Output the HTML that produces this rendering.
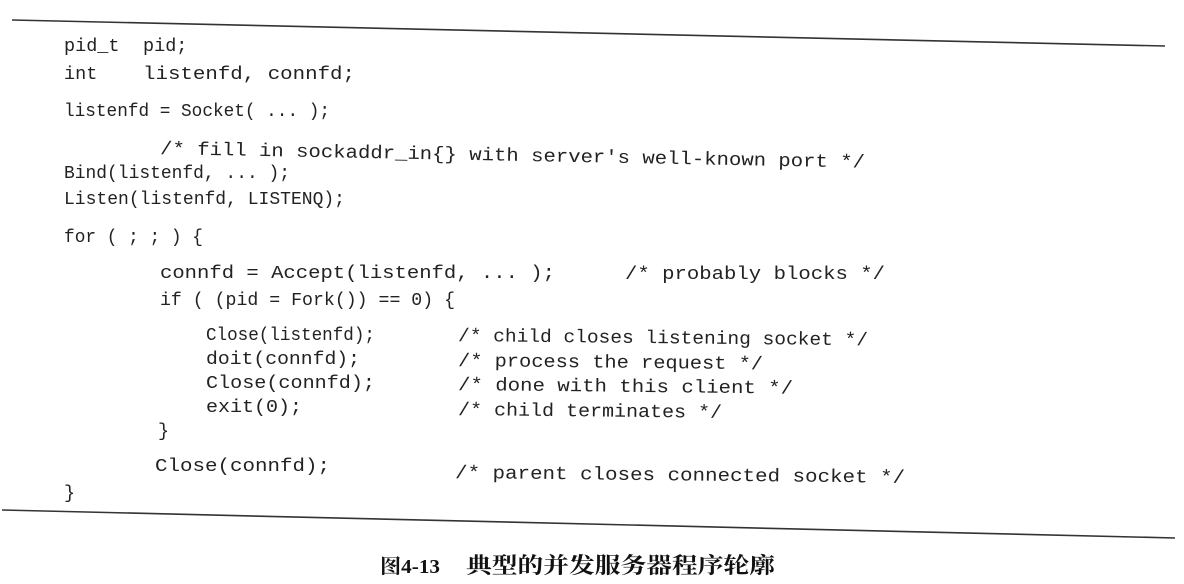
<!DOCTYPE html>
<html><head><meta charset="utf-8"><style>
html,body{margin:0;padding:0;background:#fff;width:1184px;height:584px;overflow:hidden}
svg text{font-family:"Liberation Mono",monospace;font-size:18.5px;fill:#222}
</style></head><body>
<svg width="1184" height="584" viewBox="0 0 1184 584" xmlns="http://www.w3.org/2000/svg">
<line x1="12" y1="20" x2="1165" y2="46" stroke="#333" stroke-width="1.6"/>
<line x1="2" y1="510" x2="1175" y2="538" stroke="#333" stroke-width="1.6"/>
<text x="64" y="51">pid_t</text>
<text x="143" y="51">pid;</text>
<text x="64" y="79">int</text>
<text x="143" y="79" textLength="212" lengthAdjust="spacingAndGlyphs">listenfd, connfd;</text>
<text x="64" y="116" textLength="266" lengthAdjust="spacingAndGlyphs">listenfd = Socket( ... );</text>
<text x="160" y="154" textLength="705" lengthAdjust="spacingAndGlyphs" transform="rotate(1.1 160 154)">/* fill in sockaddr_in{} with server's well-known port */</text>
<text x="64" y="178" textLength="226" lengthAdjust="spacingAndGlyphs">Bind(listenfd, ... );</text>
<text x="64" y="204" textLength="281" lengthAdjust="spacingAndGlyphs">Listen(listenfd, LISTENQ);</text>
<text x="64" y="242" textLength="139" lengthAdjust="spacingAndGlyphs">for ( ; ; ) {</text>
<text x="160" y="278" textLength="395" lengthAdjust="spacingAndGlyphs">connfd = Accept(listenfd, ... );</text>
<text x="625" y="279" textLength="260" lengthAdjust="spacingAndGlyphs">/* probably blocks */</text>
<text x="160" y="305" textLength="295" lengthAdjust="spacingAndGlyphs">if ( (pid = Fork()) == 0) {</text>
<text x="206" y="340" textLength="169" lengthAdjust="spacingAndGlyphs">Close(listenfd);</text>
<text x="458" y="341" textLength="410" lengthAdjust="spacingAndGlyphs" transform="rotate(0.6 458 341)">/* child closes listening socket */</text>
<text x="206" y="364" textLength="154" lengthAdjust="spacingAndGlyphs">doit(connfd);</text>
<text x="458" y="366" textLength="305" lengthAdjust="spacingAndGlyphs" transform="rotate(0.6 458 366)">/* process the request */</text>
<text x="206" y="388" textLength="169" lengthAdjust="spacingAndGlyphs">Close(connfd);</text>
<text x="458" y="390" textLength="335" lengthAdjust="spacingAndGlyphs" transform="rotate(0.6 458 390)">/* done with this client */</text>
<text x="206" y="412" textLength="96" lengthAdjust="spacingAndGlyphs">exit(0);</text>
<text x="458" y="415" textLength="264" lengthAdjust="spacingAndGlyphs" transform="rotate(0.6 458 415)">/* child terminates */</text>
<text x="158" y="436">}</text>
<text x="155" y="471" textLength="175" lengthAdjust="spacingAndGlyphs">Close(connfd);</text>
<text x="455" y="478" textLength="450" lengthAdjust="spacingAndGlyphs" transform="rotate(0.6 455 478)">/* parent closes connected socket */</text>
<text x="64" y="498">}</text>
<text x="380" y="573" textLength="60" lengthAdjust="spacingAndGlyphs" style='font-family:"Liberation Serif","Noto Serif CJK SC",serif;font-size:20px;font-weight:bold;fill:#111'>图4-13</text>
<text x="466" y="573" textLength="309" lengthAdjust="spacingAndGlyphs" style='font-family:"Liberation Serif","Noto Serif CJK SC",serif;font-size:22px;font-weight:bold;fill:#111'>典型的并发服务器程序轮廓</text>
</svg>
</body></html>
